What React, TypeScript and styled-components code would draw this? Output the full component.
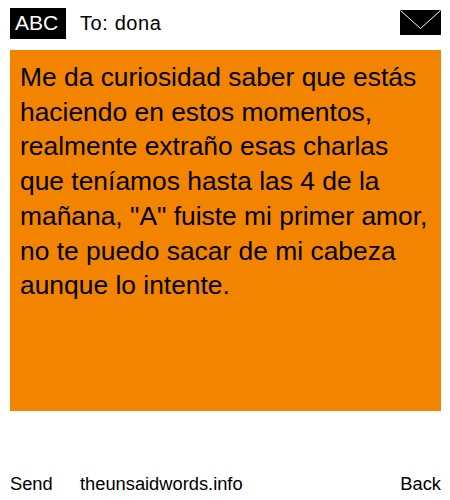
import styled, { createGlobalStyle } from 'styled-components';

const GlobalStyle = createGlobalStyle`
    html, body {
        margin: 0;
        padding: 0;
        background: #fff;
    }
`;

const Page = styled.div`
    width: 450px;
    height: 500px;
    box-sizing: border-box;
    padding: 8px 9px 0 10px;
    display: flex;
    flex-direction: column;
    font-family: "Liberation Sans", Arial, sans-serif;
    color: #000;
`;

const Header = styled.div`
    height: 31px;
    display: flex;
    align-items: center;
`;

const ModeBadge = styled.div`
    width: 56px;
    height: 31px;
    box-sizing: border-box;
    padding-left: 5px;
    background: #000;
    color: #fff;
    font-size: 21px;
    line-height: 30px;
`;

const Recipient = styled.div`
    margin-left: 14px;
    font-size: 20px;
    letter-spacing: 0.6px;
    flex: 1;
`;

const Envelope = styled.svg`
    display: block;
    width: 41px;
    height: 25px;
    align-self: flex-start;
    margin-top: 2px;
`;

const Message = styled.div`
    margin-top: 11px;
    height: 361px;
    box-sizing: border-box;
    padding: 10px 10px 0;
    background: #f38400;
    font-size: 26.4px;
    line-height: 34.7px;
`;

const Footer = styled.div`
    margin-top: 62px;
    display: flex;
    font-size: 18.3px;
    line-height: 22px;
`;

const SendLink = styled.div`
    width: 70px;
`;

const SiteLink = styled.div`
    flex: 1;
`;

const App = () => (
    <Page>
        <GlobalStyle />
        <Header>
            <ModeBadge>ABC</ModeBadge>
            <Recipient>To: dona</Recipient>
            <Envelope viewBox="0 0 41 25">
                <rect width="41" height="25" fill="#000" />
                <path d="M0.5 0.5 L20.5 18.5 L40.5 0.5" fill="none" stroke="#fff" strokeWidth="1" />
            </Envelope>
        </Header>
        <Message>
            Me da curiosidad saber que estás haciendo en estos momentos, realmente extraño esas charlas que teníamos hasta las 4 de la mañana, "A" fuiste mi primer amor, no te puedo sacar de mi cabeza aunque lo intente.
        </Message>
        <Footer>
            <SendLink>Send</SendLink>
            <SiteLink>theunsaidwords.info</SiteLink>
            <div>Back</div>
        </Footer>
    </Page>
);

export default App;
